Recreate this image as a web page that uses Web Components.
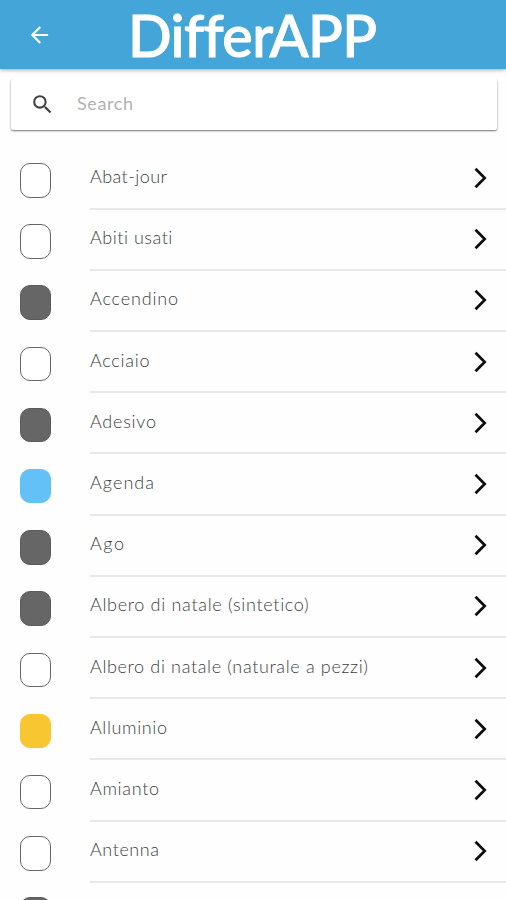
<!DOCTYPE html>
<html lang="it">
<head>
<meta charset="utf-8">
<title>DifferAPP</title>
<style>
html,body{margin:0;height:900px;overflow:hidden;background:#fefefe;font-family:Lato,"Liberation Sans",sans-serif}
</style>
</head>
<body>
<waste-app></waste-app>
<script>
// Text whose tracking is adjusted so that its line fills the given width.
class FitText extends HTMLElement{
  connectedCallback(){
    const root=this.attachShadow({mode:'open'});
    root.innerHTML='<style>:host{display:inline-block;white-space:pre}span{display:inline-block}</style><span></span>';
    const s=root.querySelector('span'),t=this.getAttribute('text');
    s.textContent=t;
    const target=+this.getAttribute('width');
    s.style.letterSpacing=((target-s.getBoundingClientRect().width)/(t.length-1)).toFixed(3)+'px';
  }
}
customElements.define('fit-text',FitText);

class AppHeader extends HTMLElement{
  constructor(){super();this.attachShadow({mode:'open'}).innerHTML=`
<style>
:host{display:grid;grid-template-columns:128px 1fr;height:69px;box-sizing:border-box;background:#43a5d8;color:#fff;box-shadow:0 1px 4px rgba(0,0,0,.35)}
svg{display:block;margin:22px 0 0 27px}
.title{font-size:57.500px;line-height:69px;font-weight:500;height:69px;-webkit-text-stroke:1px #fff}
</style>
<svg width="26" height="26" viewBox="0 0 24 24" fill="#fff"><path d="M20 11H7.8l5.6-5.6L12 4l-8 8 8 8 1.4-1.4L7.8 13H20v-2z" transform="translate(-.5 0)"/></svg>
<div class="title"><fit-text text="DifferAPP" width="247"></fit-text></div>`}
}
customElements.define('app-header',AppHeader);

class SearchBar extends HTMLElement{
  constructor(){super();this.attachShadow({mode:'open'}).innerHTML=`
<style>
:host{display:flex;align-items:center;box-sizing:border-box;height:51px;margin:10px 9px 0 11px;padding-left:19px;background:#fff;border-radius:2px;box-shadow:0 1px 2px rgba(0,0,0,.55);color:#b2b2b2;clip-path:inset(0 -4px -6px -4px)}
svg{flex:none;margin-right:22px}
div{font-size:18px;line-height:24px;padding-bottom:3px}
</style>
<svg width="25" height="25" viewBox="0 0 24 24" fill="#444"><path d="M15.5 14h-.79l-.28-.27A6.47 6.47 0 0 0 16 9.500 6.5 6.5 0 1 0 9.500 16c1.610 0 3.090-.59 4.230-1.570l.27.28v.79l5 4.990L20.490 19l-4.990-5zm-6 0a4.500 4.500 0 1 1 0-9 4.500 4.500 0 0 1 0 9z"/></svg>
<div><fit-text text="Search" width="56"></fit-text></div>`}
}
customElements.define('search-bar',SearchBar);

class WasteRow extends HTMLElement{
  connectedCallback(){
    const label=this.getAttribute('label');
    this.attachShadow({mode:'open'}).innerHTML=`
<style>
:host{display:flex;flex:none;height:61.2px;padding-left:20px;box-sizing:border-box}
.box{flex:none;width:31px;height:34.500px;margin:14.500px 39px 0 0;box-sizing:border-box;border-radius:10px;border:1px solid #666;background:#fff}
.box.dark{background:#666;border-color:#5b5b5b}
.box.blue{background:#64c1f8;border-color:#64c1f8}
.box.yellow{background:#f8c630;border-color:#f8c630}
.line{flex:1;display:flex;justify-content:space-between;box-sizing:border-box;border-bottom:2px solid #e8e8e8;font-size:18px;font-weight:300;line-height:24px;color:#404040}
fit-text{margin:15.500px 0 0 0}
svg{margin:17.500px 17px 0 0}
</style>
<div class="box ${this.getAttribute('tone')||''}"></div>
${label?`<div class="line"><fit-text text="${label}" width="${this.getAttribute('width')}"></fit-text>
<svg width="16" height="24" viewBox="0 0 16 24" fill="none" stroke="#0c0c0c" stroke-width="2.700"><path d="M2.500 2.800 11.700 12 2.500 21.200"/></svg></div>`:''}`}
}
customElements.define('waste-row',WasteRow);

class WasteApp extends HTMLElement{
  constructor(){
    super();
    const items=[['Abat-jour',77,''],['Abiti usati',83,''],['Accendino',88,'dark'],['Acciaio',59.5,''],['Adesivo',66,'dark'],['Agenda',64,'blue'],['Ago',34,'dark'],['Albero di natale (sintetico)',219,'dark'],['Albero di natale (naturale a pezzi)',278,''],['Alluminio',77,'yellow'],['Amianto',69,''],['Antenna',69,''],['',0,'dark']];
    this.attachShadow({mode:'open'}).innerHTML=`
<style>
:host{display:flex;flex-direction:column;height:900px;overflow:hidden}
app-header,search-bar{flex:none}
main{display:flex;flex-direction:column;margin-top:18.500px}
</style>
<app-header></app-header><search-bar></search-bar>
<main>${items.map(([l,w,t])=>`<waste-row label="${l}" width="${w}" tone="${t}"></waste-row>`).join('')}</main>`;
  }
}
customElements.define('waste-app',WasteApp);
</script>
</body>
</html>
